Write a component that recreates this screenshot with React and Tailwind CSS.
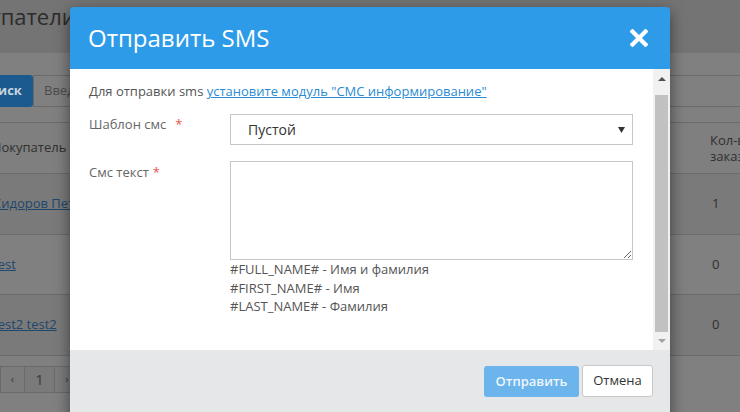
function Page() {
  return (
    <div className="flex flex-col">
      {/* page header band */}
      <div className="h-[53px] bg-[#747474] overflow-hidden">
        <div className="ml-[-51px] pt-[1px] text-[22px] leading-[30px] text-[#2c2c2c] whitespace-nowrap">Покупатели</div>
      </div>

      {/* search row */}
      <div className="mt-[22px] flex h-[32px]">
        <div className="ml-[-31px] w-[64px] shrink-0 bg-[#1b5a8e] rounded-r-[3px] text-[#c6d3df] font-bold flex items-center justify-center">Поиск</div>
        <div className="flex-1 border border-[#6a6a6a] border-r-0 flex items-center pl-[10px] text-[#4c4c4c] whitespace-nowrap">Введите имя покупателя</div>
      </div>

      {/* table */}
      <div className="mt-[15px] border-t border-[#6b6b6b]">
        <div className="h-[51px] flex items-center justify-between border-b border-[#6b6b6b] bg-[#7f7f7f] text-[#2f2f2f]">
          <span className="ml-[-8px] whitespace-nowrap">Покупатель</span>
          <span className="w-[30px] leading-[16px] whitespace-nowrap">Кол-во<br />заказов</span>
        </div>
        {[
          ['Сидоров Петр', '1', 'bg-[#7a7a7a]'],
          ['test', '0', 'bg-[#808080]'],
          ['test2 test2', '0', 'bg-[#7a7a7a]'],
        ].map(([name, count, bg]) => (
          <div key={name} className={`h-[60.5px] flex items-center justify-between border-b border-[#6b6b6b] ${bg}`}>
            <span className="ml-[-7px] text-[#1f466c] underline whitespace-nowrap">{name}</span>
            <span className="w-[28px] text-[#2f2f2f]">{count}</span>
          </div>
        ))}
      </div>

      {/* pagination */}
      <div className="mt-[10px] flex h-[27px] text-[#3a3a3a]">
        <div className="w-[25px] border border-[#6a6a6a] bg-[#7c7c7c] flex items-center justify-center text-[11px]">‹</div>
        <div className="w-[30px] border border-l-0 border-[#6a6a6a] bg-[#7a7a7a] flex items-center justify-center text-[15px]">1</div>
        <div className="w-[25px] border border-l-0 border-[#6a6a6a] bg-[#7c7c7c] flex items-center justify-center text-[11px]">›</div>
      </div>
    </div>
  );
}

function Scrollbar() {
  return (
    <div className="w-[17px] shrink-0 bg-[#f1f1f1] flex flex-col items-center">
      <div className="h-[20px] flex items-center justify-center">
        <div className="w-0 h-0 border-l-[4px] border-r-[4px] border-b-[4px] border-l-transparent border-r-transparent border-b-[#505050]" />
      </div>
      <div className="mt-[6px] h-[237px] w-[13px] bg-[#c1c1c1]" />
      <div className="h-[18px] flex items-center justify-center">
        <div className="w-0 h-0 border-l-[4px] border-r-[4px] border-t-[4px] border-l-transparent border-r-transparent border-t-[#a3a3a3]" />
      </div>
    </div>
  );
}

function Modal() {
  return (
    <div className="absolute left-[70px] top-[7px] w-[600px] rounded-t-[4px] overflow-hidden shadow-[0_5px_15px_rgba(0,0,0,0.5)] flex flex-col">
      {/* header */}
      <div className="h-[62px] bg-[#2d9be8] flex items-center justify-between pl-[18px] pr-[22px]">
        <h2 className="text-[24px] leading-[32px] text-white font-normal">Отправить SMS</h2>
        <svg width="18" height="18" viewBox="0 0 18 18">
          <path d="M2.5 2.5 L15.5 15.5 M15.5 2.5 L2.5 15.5" stroke="#fff" strokeWidth="4.2" strokeLinecap="square" />
        </svg>
      </div>

      {/* body */}
      <div className="h-[281px] bg-white flex">
        <div className="flex-1 pl-[19px] pr-[20px] pt-[13px]">
          <p className="leading-[18px] text-[#555]">
            Для отправки sms <a className="text-[#2a8bd4] underline">установите модуль "СМС информирование"</a>
          </p>

          <div className="mt-[14px] flex">
            <label className="w-[141px] pt-[1px] leading-[18px] text-[#666]">
              Шаблон смс<span className="ml-[9px] text-[#e5534b]">*</span>
            </label>
            <div className="w-[403px] h-[31px] border border-[#c6c6c6] flex items-center justify-between pl-[17px] pr-[7px] text-[14px] text-[#333]">
              <span>Пустой</span>
              <svg width="7" height="6" viewBox="0 0 7 6">
                <path d="M0 0 L7 0 L3.5 6 Z" fill="#333" />
              </svg>
            </div>
          </div>

          <div className="mt-[16px] flex">
            <label className="w-[141px] pt-[2px] leading-[18px] text-[#666]">
              Смс текст<span className="ml-[4px] text-[#e5534b]">*</span>
            </label>
            <div className="w-[403px] flex flex-col">
              <textarea className="w-[403px] h-[99px] border border-[#c6c6c6] resize-y outline-none" />
              <div className="leading-[18.5px] text-[#555]">
                <div>#FULL_NAME# - Имя и фамилия</div>
                <div>#FIRST_NAME# - Имя</div>
                <div>#LAST_NAME# - Фамилия</div>
              </div>
            </div>
          </div>
        </div>
        <Scrollbar />
      </div>

      {/* footer */}
      <div className="h-[80px] bg-[#e6e7e9] flex justify-end items-start pt-[15px] pr-[17px] gap-[3px]">
        <button className="mt-[1px] w-[95px] h-[31px] rounded-[3px] bg-[#6cb4ec] text-[#eef6fd] font-semibold">Отправить</button>
        <button className="w-[71px] h-[32px] rounded-[3px] bg-white border border-[#c9c9c9] text-[#333]">Отмена</button>
      </div>
    </div>
  );
}

export default function App() {
  return (
    <div className="relative w-[740px] h-[412px] overflow-hidden bg-[#808080] font-['Open_Sans',sans-serif] text-[13px]">
      <Page />
      <Modal />
    </div>
  );
}
